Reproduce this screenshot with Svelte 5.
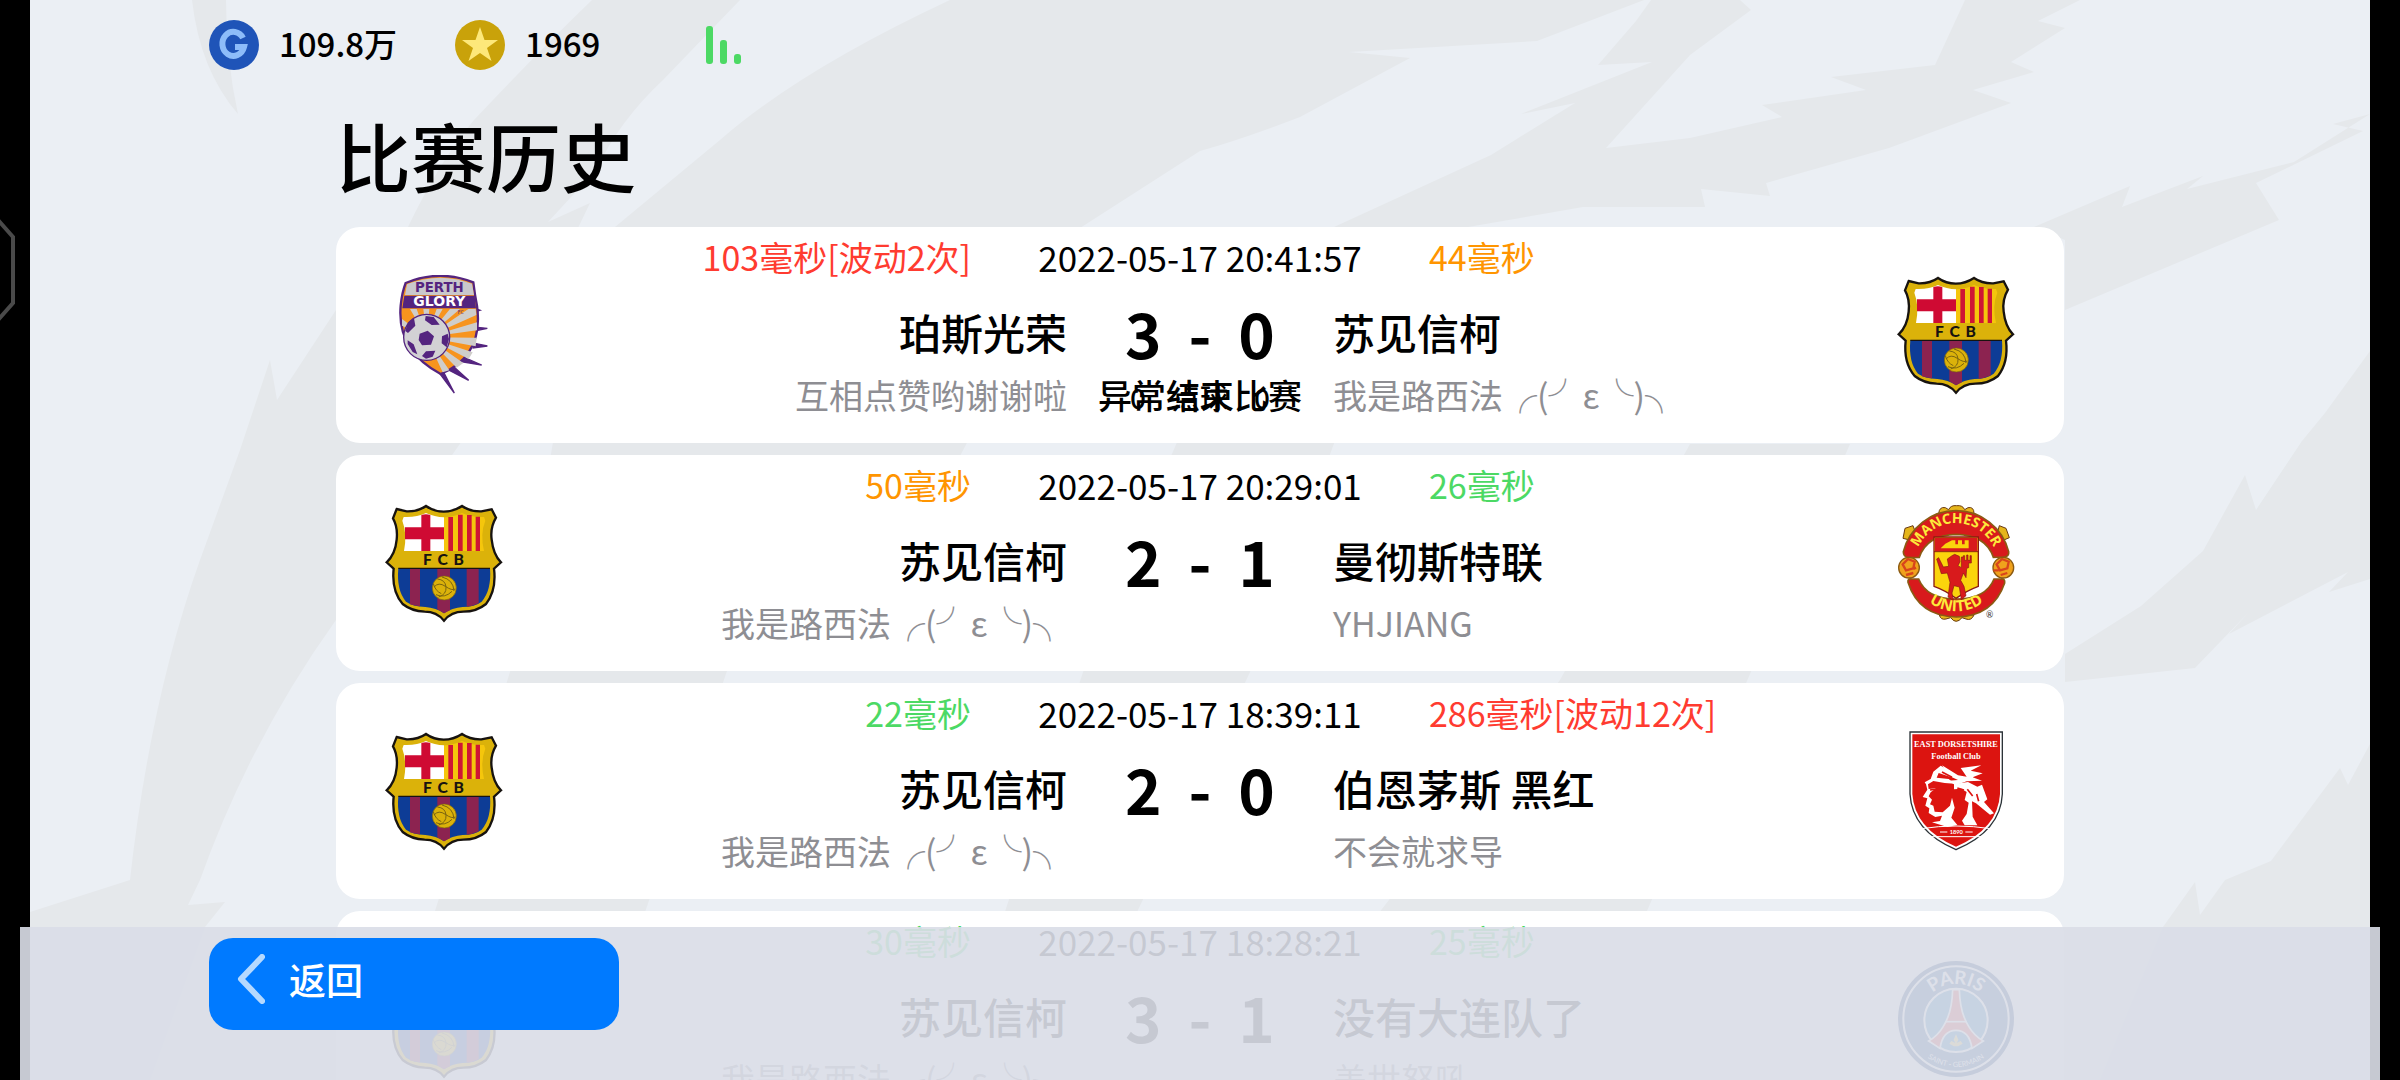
<script lang="ts">
    type Level = 'good' | 'fair' | 'poor'
    type Side = {crest: string, team: string, player: string, ping: string, level: Level}
    type Match = {time: string, score: [number, number], home: Side, away: Side, aborted?: boolean}

    const me = {crest: 'barcelona', team: '苏见信柯', player: '我是路西法╭(╯ε╰)╮'}

    const matches: Match[] = [
        {
            time: '2022-05-17 20:41:57',
            score: [3, 0],
            home: {crest: 'perth', team: '珀斯光荣', player: '互相点赞哟谢谢啦', ping: '103毫秒[波动2次]', level: 'poor'},
            away: {...me, ping: '44毫秒', level: 'fair'},
            aborted: true,
        },
        {
            time: '2022-05-17 20:29:01',
            score: [2, 1],
            home: {...me, ping: '50毫秒', level: 'fair'},
            away: {crest: 'manchester', team: '曼彻斯特联', player: 'YHJIANG', ping: '26毫秒', level: 'good'},
        },
        {
            time: '2022-05-17 18:39:11',
            score: [2, 0],
            home: {...me, ping: '22毫秒', level: 'good'},
            away: {crest: 'dorset', team: '伯恩茅斯 黑红', player: '不会就求导', ping: '286毫秒[波动12次]', level: 'poor'},
        },
        {
            time: '2022-05-17 18:28:21',
            score: [3, 1],
            home: {...me, ping: '30毫秒', level: 'good'},
            away: {crest: 'paris', team: '没有大连队了', player: '盖世怒吼', ping: '25毫秒', level: 'good'},
        },
    ]
</script>

{#snippet perth()}
    <svg class="crest" viewBox="42 48 360 360" role="img" aria-label="Perth Glory">
        <path d="M318 150l12 4-12 4zM322 205l30 3-30 6zM314 253l38 8-42 6zM284 296l51 22-60-10zM248 320l48 44-62-32zM220 338l33 64-42-56z" fill="#54247f" stroke="#54247f" stroke-width="4" />
        <path d="M107 72Q208 30 310 70Q314 105 321 140Q342 290 212 345Q80 275 92 140Q96 100 107 72z" fill="#f7941e" stroke="#54247f" stroke-width="7" />
        <path d="M111 76Q208 37 306 74L312 108H105z" fill="#c9c8cc" />
        <path d="M103 110H314L318 148H97z" fill="#54247f" />
        <g fill="#cfcdca">
            <path d="M170 235L120 150h20zM170 235L160 150h18zM170 235L200 150h18zM170 235L240 150h30zM170 235L295 150h22l2 18zM170 235L321 190v24zM170 235L320 236l-3 26zM170 235L308 280l-12 20zM170 235L280 312l-20 14zM170 235L238 334l-20 6zM170 235L96 180v20z" />
        </g>
        <circle cx="170" cy="235" r="69" fill="#d2d1d4" stroke="#54247f" stroke-width="4" />
        <g fill="#54247f">
            <path d="M149 224l24-9 19 17-9 25-27 2-10-16zM167 171l24 3 18 23-24 1-20-14zM132 178l4 22-22 22-8-6 8-26zM113 244l18 12 11 30-14-7-15-24zM168 277l28-2-8 18-20 6-12-8zM216 232l17-8 4 16-7 25-15-12z" />
        </g>
        <g class="wide" font-weight="700" text-anchor="middle">
            <text x="208" y="99" font-size="40" fill="#54247f">PERTH</text>
            <text x="208" y="142" font-size="42" fill="#fff">GLORY</text>
        </g>
        <text x="272" y="166" font-size="14" text-anchor="middle" fill="#54247f">FC</text>
    </svg>
{/snippet}

{#snippet barcelona()}
    <svg class="crest" viewBox="48 48 360 360" role="img" aria-label="FC Barcelona">
        <path d="M86 66L116 73Q150 74 174 57Q198 74 227 74Q256 74 282 57Q306 74 340 73L371 67L384 92Q366 122 371 158Q376 204 399 226L378 245Q386 310 354 351Q326 374 286 374Q250 374 228 401Q206 374 170 374Q130 372 104 351Q70 312 77 245L56 226Q82 202 86 158Q90 120 75 94z" fill="#dbb20a" stroke="#171310" stroke-width="7" />
        <path d="M107 90Q145 92 174 78Q200 90 228 91V192H108Q118 140 103 101z" fill="#fff" />
        <path d="M160 84Q174 80 187 84V192H160zM111 121H228V157H111z" fill="#cf0a33" />
        <path d="M228 91Q258 90 282 78Q312 92 348 90L352 101Q336 140 348 192H228z" fill="#f5c60c" />
        <path d="M241 90h14V192h-14zM270 83h14V192h-14zM297 84h14V192h-14zM323 89h13V192h-13z" fill="#cf1535" />
        <path d="M91 244H366Q371 310 341 344Q320 360 284 360Q252 362 228 379Q204 362 172 360Q134 358 114 344Q85 310 91 244z" fill="#0d3c96" />
        <path d="M126 244h30V358q-16-2-30-6zM208 244h38V370l-18 9-20-12zM296 244h36V349q-18 9-36 10z" fill="#8c2350" />
        <path d="M91 244H366" stroke="#171310" stroke-width="4" />
        <circle cx="229" cy="303" r="36" fill="#dbb20a" stroke="#7a6410" stroke-width="2" />
        <path d="M208 276q24 2 26 24t-22 30M222 270q34 8 36 42M198 300q14-16 34-2 20 14 30 8M204 323q26 12 48-10M196 290q6 22 24 30" fill="none" stroke="#7a6410" stroke-width="3" />
        <g font-size="47" font-weight="900" text-anchor="middle" fill="#171310">
            <text x="178" y="235">F</text>
            <text x="224" y="235">C</text>
            <text x="272" y="235">B</text>
        </g>
    </svg>
{/snippet}

{#snippet manchester()}
    <svg class="crest" viewBox="48 42 360 360" role="img" aria-label="Manchester United">
        <defs>
            <path id="mu-top" d="M106 204A124 124 0 0 1 350 204" />
            <path id="mu-bottom" d="M118 312A140 140 0 0 0 340 312" />
        </defs>
        <g fill="#e5b51b" stroke="#6a3a12" stroke-width="3">
            <path d="M176 74q2-22 20-18l10 6q6-14 24-12 18-2 24 12l10-6q18-4 18 18l-20 12H196z" />
            <path d="M75 118l24-8 8 22-22 20-16-4zM378 118l-20-8-6 22 22 20 14-6z" />
            <path d="M178 378h104q-8 18-24 12l-12-4q-18 22-34 0l-14 4q-16 4-20-12z" />
        </g>
        <path d="M70 188A163 163 0 0 1 386 188Q388 202 372 204L340 205Q318 138 229 136Q140 138 118 205L86 206Q70 204 70 188z" fill="#d81a1c" stroke="#8b5a12" stroke-width="5" />
        <path d="M84 280Q82 268 96 270H116Q140 330 229 330Q318 330 342 270H362Q376 268 374 282Q340 382 229 384Q116 382 84 280z" fill="#d81a1c" stroke="#8b5a12" stroke-width="5" />
        <g stroke="#8b5a12" stroke-width="4">
            <circle cx="87" cy="236" r="31" fill="#f0a21c" />
            <circle cx="370" cy="236" r="31" fill="#f0a21c" />
        </g>
        <path d="M68 226l16-16 20 8-4 20-22 6zM78 258l22-6M350 226l16-16 20 8-4 20-22 6zM362 258l20-6M108 236l-8 4M340 244l16 0" fill="none" stroke="#d8451c" stroke-width="7" />
        <path d="M162 144H295V292Q262 304 228 328Q196 304 162 292z" fill="#fbd40c" stroke="#8b1a12" stroke-width="4" />
        <path d="M165 147H292V186H165z" fill="#d81a1c" />
        <path d="M182 178h84V154h-12v12h-8v-12h-12v12h-8v-12h-10l-20 10z" fill="#fbd40c" />
        <path d="M162 188H295" stroke="#8b1a12" stroke-width="3" />
        <path d="M176 206l14 28 16-2-4-22 14-10 8-4 14 6 2 16-6 12 10 6v-32h6v-4h4v14h6v-16h4v16h6v-14h4v22h-8v14l-6 2-2 28-8-14-8 22 10 18 6 28-14 12-2-12-4-26-16-4-6 22 4 22-16-10 6-44-8-28-18 2-14-44z" fill="#d81a1c" stroke="#8b1a12" stroke-width="2" />
        <g class="caps" font-weight="700" fill="#fdea3a">
            <text font-size="42"><textPath href="#mu-top" startOffset="50%" text-anchor="middle">MANCHESTER</textPath></text>
            <text font-size="46"><textPath href="#mu-bottom" startOffset="50%" text-anchor="middle">UNITED</textPath></text>
        </g>
        <text x="329" y="387" font-size="26" text-anchor="middle" fill="#333">®</text>
    </svg>
{/snippet}

{#snippet dorset()}
    <svg class="crest" viewBox="48 51 360 360" role="img" aria-label="East Dorsetshire">
        <path d="M90 54H367V240Q362 350 228 407Q96 350 90 240z" fill="#fff" stroke="#2c3338" stroke-width="4" />
        <path d="M97 61H360V240Q354 344 228 398Q104 344 97 240z" fill="#dc1410" />
        <g class="slab" font-weight="700" text-anchor="middle" fill="#fff">
            <text x="228" y="100" font-size="25">EAST DORSETSHIRE</text>
            <text x="228" y="136" font-size="25">Football Club</text>
        </g>
        <g fill="#fff">
            <path d="M134 205l18-10 8-22 22-18 14 8 30 20-14 6-36-12-6 14 36 4 18 14-30-2-34-6-16 10 2 14 22-2-16 12-6 12 10 10-6 14 10 4 4 18 24 2 22-20 6-24 8 30-10 30 18 22-30 6-46-14 24-4 6-16-20 4-20-12 2-14-12-8 6-22-14-4 14-22-4-16z" />
            <path d="M186 154l48 30 26 4-18-26 62-8-32 16 36 8-30 12 28 10-46 2-34 12-20-14 28-2-26-12z" />
            <path d="M222 210l42-6 28 14 14-6 16 44-10 8 30 34-12 4-42-34-12-6 2 46 14 26-38 0-8-14 14-20 6-34-12-8 6-24-16-10-22 2z" />
        </g>
        <path d="M186 174l30 16M150 228l30-4M160 250l20 4M262 226l16 20M290 240l6 22M232 222l20 6" fill="none" stroke="#dc1410" stroke-width="5" />
        <path d="M124 344Q176 336 228 336T332 344M146 368H310" fill="none" stroke="#fff" stroke-width="3" />
        <path d="M180 354h22M256 354h22" stroke="#fff" stroke-width="3" />
        <text x="229" y="361" font-size="17" font-weight="700" text-anchor="middle" fill="#fff">1890</text>
    </svg>
{/snippet}

{#snippet paris()}
    <svg class="crest" viewBox="0 0 360 360" role="img" aria-label="Paris Saint-Germain">
        <defs>
            <path id="psg-top" d="M71 184A109 109 0 0 1 289 184" />
            <path id="psg-bottom" d="M36 180A144 144 0 0 0 324 180" />
        </defs>
        <circle cx="180" cy="180" r="174" fill="#0a2f6c" />
        <circle cx="180" cy="180" r="158" fill="#0d4382" stroke="#fff" stroke-width="6" />
        <circle cx="180" cy="184" r="95" fill="#1173b4" stroke="#fff" stroke-width="6" />
        <path d="M170 92h20q2 70 28 110 16 28 44 44l-34 22q-8-54-48-54t-48 54l-34-22q28-16 44-44 26-40 28-110z" fill="#e2312f" stroke="#fff" stroke-width="5" />
        <path d="M148 188h64" stroke="#fff" stroke-width="5" />
        <path d="M180 226l7 16-5 10 12-6 6 8-14 8h-12l-14-8 6-8 12 6-5-10z" fill="#e8c84a" />
        <text font-size="56" font-weight="700" fill="#fff"><textPath href="#psg-top" startOffset="50%" text-anchor="middle">PARIS</textPath></text>
        <text font-size="22" font-weight="400" fill="#fff"><textPath href="#psg-bottom" startOffset="50%" text-anchor="middle">SAINT - GERMAIN</textPath></text>
    </svg>
{/snippet}

{#snippet crest(name: string)}
    {#if name === 'perth'}
        {@render perth()}
    {:else if name === 'barcelona'}
        {@render barcelona()}
    {:else if name === 'manchester'}
        {@render manchester()}
    {:else if name === 'dorset'}
        {@render dorset()}
    {:else}
        {@render paris()}
    {/if}
{/snippet}

<div class="screen">
    <svg class="backdrop" viewBox="30 0 2340 1080" preserveAspectRatio="none" aria-hidden="true">
        <path d="M192 0H226Q226 60 238 114Q200 70 192 0z" />
        <path d="M592 0H740L663 80Q620 120 596 170L548 222L590 203L578 228L540 330L336 620Q250 740 200 880L188 905L225 902L205 927L150 1080H30V912L130 880Q150 700 200 560L240 450L270 360L277 400L336 310L408 227Q440 160 474 120Q540 50 592 0z" />
        <path d="M950 0H1644L1537 41L1349 52L1410 58L1300 117Q1240 140 1200 151L1080 228L960 456H800L640 927H430L520 640L560 400L615 227L720 140Q800 70 950 0z" />
        <path d="M1651 0H1740L1751 10L1690 55L1606 148L1690 138L1782 117L1762 105L1866 90L1831 77L1935 65L1965 0H2080L2038 21L2065 28L2011 62L2034 72L1973 90L2011 103L1889 148L1766 183L1770 196L1701 189L1705 207L1583 207L1468 227L1350 400L1250 672L1130 927H1000L1100 620L1230 320L1334 227L1491 155L1575 103L1521 114L1652 62L1598 65L1636 21z" />
        <path d="M2370 114L2333 124L2363 131L2256 183L2279 220L2065 310V240L2034 227L2130 186L2122 207L2203 176L2187 189L2294 162z" />
        <path d="M2370 351L2325 413L2302 441L2256 510L2245 475L2203 551L2141 606L2065 654V682L2195 668L2248 613L2229 634L2348 572L2329 592L2370 579z" />
        <path d="M2370 744L2348 785L2340 768L2271 861L2225 880L2200 915L2195 882L2163 927L2100 1080H2370z" />
        <path d="M1690 444L1560 680L1368 927H1640L1850 444z" />
    </svg>

    <svg class="edge-handle" viewBox="0 0 16 104" aria-hidden="true">
        <path d="M-2 2L13 19V85L-2 102" />
    </svg>

    <header>
        <div class="coin">
            <svg viewBox="0 0 50 50" aria-hidden="true">
                <circle cx="25" cy="25" r="25" fill="#1f54b8" />
                <path d="M34 18A11 12 0 1 0 35 27H26" fill="none" stroke="#8dbcf9" stroke-width="6" />
            </svg>
            <span>109.8万</span>
        </div>
        <div class="coin">
            <svg viewBox="0 0 50 50" aria-hidden="true">
                <circle cx="25" cy="25" r="25" fill="#c9a20a" />
                <path d="M25 7L29.500 20H43L32 28L36.500 41L25 33L13.500 41L18 28L7 20H20.500z" fill="#fde87a" />
            </svg>
            <span>1969</span>
        </div>
        <svg class="signal" viewBox="0 0 36 38" role="img" aria-label="信号">
            <rect width="7" height="38" rx="3" />
            <rect x="14" y="14" width="7" height="24" rx="3" />
            <rect x="28" y="28" width="7" height="10" rx="3" />
        </svg>
    </header>

    <main>
        <h1>比赛历史</h1>
        <ul>
            {#each matches as match}
                <li>
                    {@render crest(match.home.crest)}
                    <div class="info">
                        <div class="pings">
                            <span class="home {match.home.level}">{match.home.ping}</span>
                            <time>{match.time}</time>
                            <span class={match.away.level}>{match.away.ping}</span>
                        </div>
                        <div class="teams">
                            <span class="home">{match.home.team}</span>
                            <div class="score">
                                <span>{match.score[0]}</span>
                                <span>-</span>
                                <span>{match.score[1]}</span>
                            </div>
                            <span>{match.away.team}</span>
                        </div>
                        <div class="players">
                            <span class="home">{match.home.player}</span>
                            <div class="remark">
                                {#if match.aborted}
                                    <div class="penalties"><span>0</span><span>点球</span><span>0</span></div>
                                    <div>异常结束比赛</div>
                                {/if}
                            </div>
                            <span>{match.away.player}</span>
                        </div>
                    </div>
                    {@render crest(match.away.crest)}
                </li>
            {/each}
        </ul>
    </main>

    <footer>
        <button>
            <svg viewBox="0 0 28 50" aria-hidden="true"><path d="M25 3L4 25L25 47" /></svg>
            返回
        </button>
    </footer>
</div>

<style>
    :global(body) {
        background: #000;
    }

    .screen {
        position: relative;
        height: 100vh;
        overflow: hidden;
        color: #000;
        font-family: "Noto Sans CJK SC", "Noto Sans", sans-serif;
        font-weight: 400;
    }

    .backdrop {
        position: absolute;
        top: 0;
        left: 30px;
        width: calc(100% - 60px);
        height: 100%;
        background: #ebeff4;
        fill: #e5e8eb;
    }

    .edge-handle {
        position: absolute;
        top: 218px;
        left: 0;
        width: 16px;
        height: 104px;
        fill: none;
        stroke: #4a4a4a;
        stroke-width: 4px;
    }

    header {
        position: relative;
        display: flex;
        align-items: center;
        padding: 20px 209px 0;
    }

    .coin {
        display: flex;
        gap: 20px;
        margin-right: 58px;
        font-size: 33px;
        font-weight: 500;
        line-height: 46px;
    }

    .coin svg {
        width: 50px;
        height: 50px;
    }

    .signal {
        width: 36px;
        height: 38px;
        margin-left: 48px;
        fill: #4cd964;
    }

    main {
        position: relative;
        padding: 0 14%;
    }

    h1 {
        margin: 33px 0 20px;
        font-size: 75px;
        font-weight: 500;
        line-height: 104px;
    }

    ul {
        display: flex;
        flex-direction: column;
        gap: 12px;
        margin: 0;
        padding: 0;
        list-style: none;
    }

    li {
        display: flex;
        align-items: center;
        padding: 0 48px;
        border-radius: 24px;
        background: #fff;
    }

    .crest {
        flex: none;
        width: 120px;
        height: 120px;
        font-family: Lato, sans-serif;
    }

    .wide {
        font-family: "DejaVu Sans", sans-serif;
    }

    .caps {
        font-family: "Open Sans", sans-serif;
    }

    .slab {
        font-family: "Liberation Serif", serif;
    }

    .info {
        flex: 1;
        padding: 6px 0 24px;
    }

    .pings, .teams, .players {
        display: grid;
    }

    .home {
        text-align: right;
    }

    .pings {
        grid-template-columns: 1fr 458px 1fr;
        font-size: 34px;
        line-height: 48px;
    }

    time {
        font-size: 35px;
        text-align: center;
    }

    .good {
        color: #4cd964;
    }

    .fair {
        color: #ff9500;
    }

    .poor {
        color: #ff3b30;
    }

    .teams {
        grid-template-columns: 1fr 266px 1fr;
        margin: 21px 0 9px;
        font-size: 42px;
        font-weight: 500;
        line-height: 60px;
    }

    .score {
        display: grid;
        grid-template-columns: 1fr 1fr 1fr;
        height: 60px;
        padding: 0 48px;
        font-size: 62px;
        font-weight: 700;
        line-height: 60px;
        text-align: center;
    }

    .players {
        grid-template-columns: 1fr 266px 1fr;
        color: #8e8e93;
        font-size: 34px;
        line-height: 48px;
    }

    .remark {
        position: relative;
        color: #000;
        font-weight: 500;
        text-align: center;
    }

    /* shares the line with the remark */
    .penalties {
        position: absolute;
        inset: 0;
        display: grid;
        grid-template-columns: 1fr 1fr 1fr;
        padding: 0 40px;
        font-size: 28px;
        line-height: 52px;
    }

    footer {
        position: absolute;
        right: 20px;
        bottom: 0;
        left: 20px;
        box-sizing: border-box;
        height: 153px;
        padding: 11px 189px;
        background: rgba(218, 221, 231, 0.91);
    }

    button {
        display: flex;
        align-items: center;
        gap: 24px;
        width: 410px;
        height: 92px;
        padding: 0 28px 10px;
        border: none;
        border-radius: 24px;
        background: #007aff;
        color: #fff;
        font-family: inherit;
        font-size: 37px;
        font-weight: 500;
        line-height: 50px;
        cursor: pointer;
    }

    button svg {
        width: 28px;
        height: 50px;
        fill: none;
        stroke: #b5d9ff;
        stroke-width: 6px;
        stroke-linecap: round;
        stroke-linejoin: round;
    }
</style>
